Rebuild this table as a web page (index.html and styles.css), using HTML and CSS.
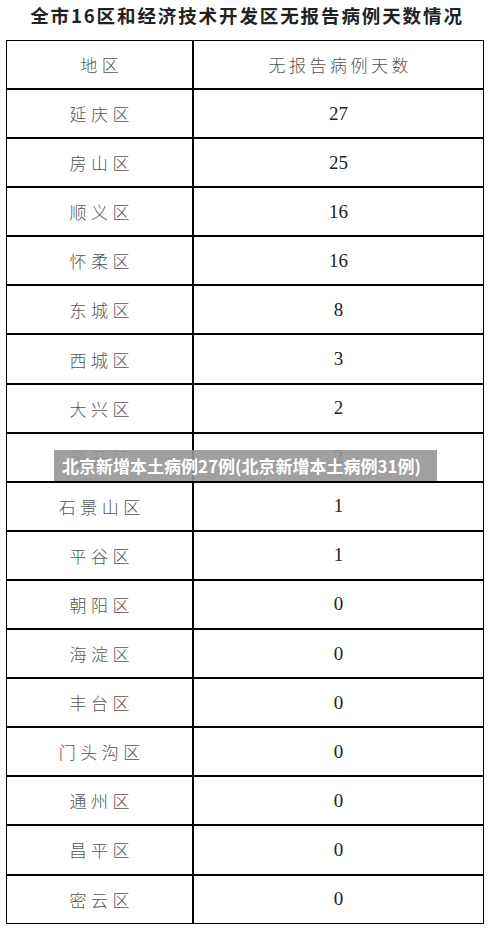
FILE: index.html
```html
<!DOCTYPE html>
<html lang="zh-CN">
<head>
<meta charset="utf-8">
<title>全市16区和经济技术开发区无报告病例天数情况</title>
<link rel="stylesheet" href="styles.css">
</head>
<body>
<div class="page">
  <h1 class="title">全市16区和经济技术开发区无报告病例天数情况</h1>
  <div class="table">
    <div class="row head"><div class="cell name">地区</div><div class="cell num cjk">无报告病例天数</div></div>
    <div class="row"><div class="cell name">延庆区</div><div class="cell num">27</div></div>
    <div class="row"><div class="cell name">房山区</div><div class="cell num">25</div></div>
    <div class="row"><div class="cell name">顺义区</div><div class="cell num">16</div></div>
    <div class="row"><div class="cell name">怀柔区</div><div class="cell num">16</div></div>
    <div class="row"><div class="cell name">东城区</div><div class="cell num">8</div></div>
    <div class="row"><div class="cell name">西城区</div><div class="cell num">3</div></div>
    <div class="row"><div class="cell name">大兴区</div><div class="cell num">2</div></div>
    <div class="row"><div class="cell name">经开区</div><div class="cell num">2</div></div>
    <div class="row"><div class="cell name">石景山区</div><div class="cell num">1</div></div>
    <div class="row"><div class="cell name">平谷区</div><div class="cell num">1</div></div>
    <div class="row"><div class="cell name">朝阳区</div><div class="cell num">0</div></div>
    <div class="row"><div class="cell name">海淀区</div><div class="cell num">0</div></div>
    <div class="row"><div class="cell name">丰台区</div><div class="cell num">0</div></div>
    <div class="row"><div class="cell name">门头沟区</div><div class="cell num">0</div></div>
    <div class="row"><div class="cell name">通州区</div><div class="cell num">0</div></div>
    <div class="row"><div class="cell name">昌平区</div><div class="cell num">0</div></div>
    <div class="row last"><div class="cell name">密云区</div><div class="cell num">0</div></div>
  </div>
  <div class="banner">北京新增本土病例27例(北京新增本土病例31例)</div>
</div>
</body>
</html>
```

FILE: styles.css
```css
html, body {
  margin: 0;
  padding: 0;
  background: #fff;
}
.page {
  position: relative;
  width: 492px;
  height: 931px;
  overflow: hidden;
}
.title {
  margin: 0;
  height: 40px;
  padding-top: 3px;
  padding-left: 2px;
  box-sizing: border-box;
  text-align: center;
  font-family: "Noto Sans CJK SC", sans-serif;
  font-weight: 700;
  font-size: 18.5px;
  letter-spacing: 1.9px;
  line-height: 24px;
  color: #222;
}
.table {
  margin-left: 6px;
  width: 478px;
  border-top: 1px solid #000;
  border-left: 1px solid #000;
  border-right: 1px solid #000;
  box-sizing: border-box;
}
.row {
  display: grid;
  grid-template-columns: 187px 1fr;
  height: 49.1px;
  border-bottom: 2px solid #000;
  box-sizing: border-box;
}
.row.head {
  height: 49px;
}
.row.last {
  border-bottom-width: 1px;
  height: 48.1px;
}
.cell {
  display: flex;
  align-items: center;
  justify-content: center;
}
.cell.name {
  border-right: 2px solid #000;
  font-family: "Noto Sans CJK SC", sans-serif;
  font-weight: 300;
  font-size: 17px;
  letter-spacing: 4.5px;
  padding-left: 4.5px;
  color: #555;
}
.cell.num {
  font-family: "Liberation Serif", "Noto Sans CJK SC", serif;
  font-size: 19px;
  color: #222;
}
.cell.num.cjk {
  font-family: "Noto Sans CJK SC", sans-serif;
  font-weight: 300;
  font-size: 17px;
  letter-spacing: 3.5px;
  padding-left: 3.5px;
  color: #555;
}
.banner {
  position: absolute;
  left: 54px;
  top: 450px;
  width: 383px;
  height: 31px;
  box-sizing: border-box;
  padding-left: 8px;
  background: rgba(150, 150, 150, 0.9);
  color: #fff;
  font-family: "Noto Sans CJK SC", sans-serif;
  font-weight: 700;
  font-size: 17px;
  line-height: 31px;
  white-space: nowrap;
}
```
